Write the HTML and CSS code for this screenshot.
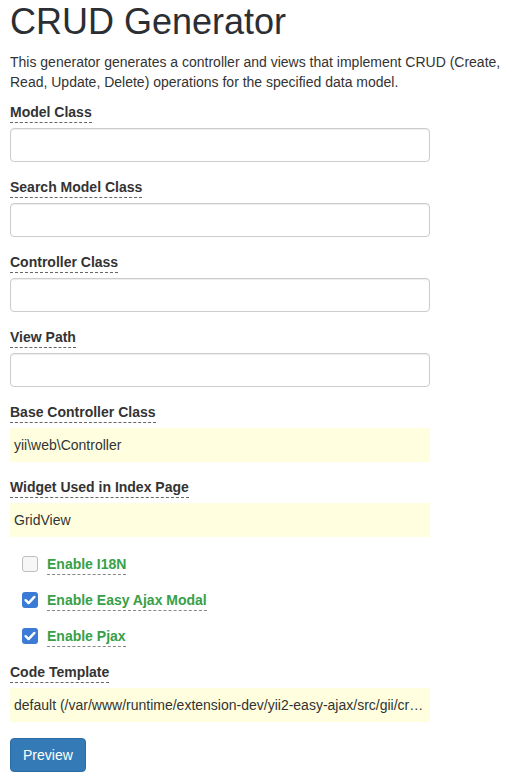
FILE: index.html
```html
<!DOCTYPE html>
<html>
<head>
<meta charset="utf-8">
<link rel="stylesheet" href="styles.css">
</head>
<body>
<div class="page">
  <h1 class="title">CRUD Generator</h1>
  <p class="intro">This generator generates a controller and views that implement CRUD (Create, Read, Update, Delete) operations for the specified data model.</p>

  <div class="form-group">
    <label class="help">Model Class</label>
    <div class="input"></div>
  </div>
  <div class="form-group">
    <label class="help">Search Model Class</label>
    <div class="input"></div>
  </div>
  <div class="form-group">
    <label class="help">Controller Class</label>
    <div class="input"></div>
  </div>
  <div class="form-group">
    <label class="help">View Path</label>
    <div class="input"></div>
  </div>
  <div class="form-group">
    <label class="help">Base Controller Class</label>
    <div class="sticky-value">yii\web\Controller</div>
  </div>
  <div class="form-group">
    <label class="help">Widget Used in Index Page</label>
    <div class="sticky-value">GridView</div>
  </div>

  <div class="checks">
    <div class="check-row">
      <span class="box"></span>
      <span class="check-label">Enable I18N</span>
    </div>
    <div class="check-row">
      <span class="box checked"><svg viewBox="0 0 16 16" width="16" height="16"><path d="M3.6 8.2 L6.6 11.1 L12.4 4.9" fill="none" stroke="#fff" stroke-width="2.4" stroke-linecap="round" stroke-linejoin="round"/></svg></span>
      <span class="check-label">Enable Easy Ajax Modal</span>
    </div>
    <div class="check-row">
      <span class="box checked"><svg viewBox="0 0 16 16" width="16" height="16"><path d="M3.6 8.2 L6.6 11.1 L12.4 4.9" fill="none" stroke="#fff" stroke-width="2.4" stroke-linecap="round" stroke-linejoin="round"/></svg></span>
      <span class="check-label">Enable Pjax</span>
    </div>
  </div>

  <div class="form-group">
    <label class="help">Code Template</label>
    <div class="sticky-value">default (/var/www/runtime/extension-dev/yii2-easy-ajax/src/gii/cr…</div>
  </div>

  <div class="actions">
    <button class="btn-primary" type="button">Preview</button>
  </div>
</div>
</body>
</html>
```
FILE: styles.css
```css
html, body {
  margin: 0;
  padding: 0;
  background: #fff;
}
body {
  font-family: "Liberation Sans", Arial, sans-serif;
  font-size: 14px;
  line-height: 20px;
  color: #333;
}
.page {
  padding: 2px 0 0 10px;
}
.title {
  margin: 0 0 10px 0;
  font-size: 36px;
  line-height: 1.1;
  font-weight: 500;
  color: #2b2e33;
}
.intro {
  margin: 0 0 10px 0;
}
.form-group {
  margin-bottom: 15px;
}
.help {
  display: inline-block;
  font-weight: bold;
  border-bottom: 1px dashed #666;
  margin-bottom: 5px;
  color: #333;
}
.input {
  box-sizing: border-box;
  width: 420px;
  height: 34px;
  border: 1px solid #ccc;
  border-radius: 4px;
  background: #fff;
  box-shadow: inset 0 1px 1px rgba(0,0,0,.075);
}
.sticky-value {
  box-sizing: border-box;
  width: 420px;
  height: 34px;
  padding: 7px 4px;
  background: #ffffe0;
  white-space: nowrap;
  overflow: hidden;
}
.checks {
  display: flex;
  flex-direction: column;
  gap: 15px;
  padding: 2px 0 0 12px;
  margin-bottom: 15px;
}
.check-row {
  display: flex;
  align-items: flex-start;
  gap: 9px;
}
.box {
  box-sizing: border-box;
  width: 16px;
  height: 16px;
  margin-top: 2px;
  border-radius: 3px;
  border: 1px solid #bdbdbd;
  background: #f7f7f7;
  display: flex;
}
.box.checked {
  border: none;
  background: #3b7bd6;
}
.check-label {
  font-weight: bold;
  color: #37a047;
  border-bottom: 1px dashed #888;
}
.actions {
  padding-top: 1px;
}
.btn-primary {
  font-family: "Liberation Sans", Arial, sans-serif;
  font-size: 14px;
  line-height: 20px;
  padding: 6px 12px;
  border: 1px solid #2e6da4;
  border-radius: 4px;
  background: #337ab7;
  color: #fff;
}
```
